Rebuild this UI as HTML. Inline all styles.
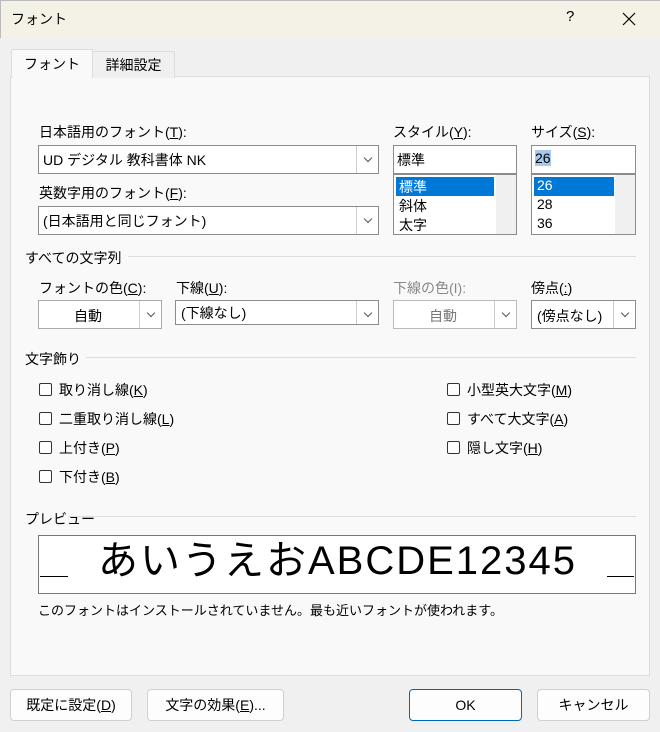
<!DOCTYPE html>
<html><head><meta charset="utf-8"><style>
*{box-sizing:border-box;margin:0;padding:0}
body{width:660px;height:732px;background:#f0f0f0;position:relative;overflow:hidden;font-family:"Liberation Sans","Noto Sans CJK JP",sans-serif;font-size:14px;color:#000}
.a{position:absolute;white-space:nowrap}
.box{position:absolute;background:#fff;border:1px solid #8c8c8c}
.dd{position:absolute;right:0;top:0;bottom:0;width:22px;border-left:1px solid #ccc;background:#fff}
.dd:after{content:"";position:absolute;left:8px;top:9px;width:5px;height:5px;border-right:1px solid #555;border-bottom:1px solid #555;transform:rotate(45deg)}
.sel{background:#0078d7;color:#fff}
.sb{position:absolute;right:0;top:0;bottom:0;width:20px;background:#f0f0f0}
.hr{position:absolute;height:1px;background:#ddd}
.cb{position:absolute;width:13px;height:13px;border:1px solid #333;background:#fff;border-radius:2px}
.btn{position:absolute;background:#fdfdfd;border:1px solid #d0d0d0;border-radius:4px;text-align:center;line-height:30px;font-size:14px}
u{text-decoration:underline}
</style></head><body>
<div class="a" style="left:0;top:0;width:660px;height:38px;background:#f4f2e6;border-top:1px solid #bbb;border-left:1px solid #bbb"></div>
<div class="a" style="left:11px;top:9px;font-size:14px">フォント</div>
<div class="a" style="left:566px;top:8px;font-size:15px">?</div>
<svg class="a" style="left:622px;top:12px" width="14" height="14"><path d="M1 1L13 13M13 1L1 13" stroke="#000" stroke-width="1.2"/></svg>
<div class="a" style="left:10px;top:76px;width:640px;height:600px;background:#f9f9f9;border:1px solid #ddd"></div>
<div class="a" style="left:92px;top:51px;width:83px;height:27px;background:#f0f0f0;border:1px solid #ddd;border-bottom:none;text-align:center;line-height:27px">詳細設定</div>
<div class="a" style="left:11px;top:49px;width:82px;height:29px;background:#f9f9f9;border:1px solid #ddd;border-bottom:none;text-align:center;line-height:29px">フォント</div>

<div class="a" style="left:39px;top:122px">日本語用のフォント(<u>T</u>):</div>
<div class="box" style="left:38px;top:145px;width:341px;height:29px"><span class="a" style="left:4px;top:4px">UD デジタル 教科書体 NK</span><div class="dd"></div></div>
<div class="a" style="left:39px;top:183px">英数字用のフォント(<u>F</u>):</div>
<div class="box" style="left:38px;top:206px;width:341px;height:29px"><span class="a" style="left:4px;top:4px">(日本語用と同じフォント)</span><div class="dd"></div></div>

<div class="a" style="left:393px;top:122px">スタイル(<u>Y</u>):</div>
<div class="box" style="left:393px;top:145px;width:124px;height:29px"><span class="a" style="left:3px;top:4px">標準</span></div>
<div class="box" style="left:393px;top:174px;width:124px;height:61px"><div class="sb"></div>
<div class="a sel" style="left:2px;top:2px;width:98px;height:19px;padding-left:3px">標準</div>
<div class="a" style="left:5px;top:21px">斜体</div><div class="a" style="left:5px;top:40px">太字</div></div>

<div class="a" style="left:531px;top:122px">サイズ(<u>S</u>):</div>
<div class="box" style="left:531px;top:145px;width:105px;height:29px"><span class="a" style="left:3px;top:4px;background:#a6c8ec">26</span></div>
<div class="box" style="left:531px;top:174px;width:105px;height:61px"><div class="sb"></div>
<div class="a sel" style="left:2px;top:2px;width:80px;height:19px;padding-left:3px">26</div>
<div class="a" style="left:5px;top:21px">28</div><div class="a" style="left:5px;top:40px">36</div></div>

<div class="a" style="left:25px;top:248px">すべての文字列</div>
<div class="hr" style="left:128px;top:256px;width:508px"></div>
<div class="a" style="left:39px;top:278px">フォントの色(<u>C</u>):</div>
<div class="box" style="left:38px;top:300px;width:124px;height:29px;border-color:#aaa"><span class="a" style="left:35px;top:5px">自動</span><div class="dd"></div></div>
<div class="a" style="left:176px;top:278px">下線(<u>U</u>):</div>
<div class="box" style="left:175px;top:300px;width:204px;height:25px"><span class="a" style="left:5px;top:2px">(下線なし)</span><div class="dd"></div></div>
<div class="a" style="left:393px;top:278px;color:#888">下線の色(I):</div>
<div class="box" style="left:393px;top:300px;width:124px;height:29px;border-color:#bbb;color:#777"><span class="a" style="left:35px;top:5px">自動</span><div class="dd"></div></div>
<div class="a" style="left:531px;top:278px">傍点(<u>:</u>)</div>
<div class="box" style="left:531px;top:300px;width:105px;height:29px"><span class="a" style="left:5px;top:5px">(傍点なし)</span><div class="dd"></div></div>

<div class="a" style="left:25px;top:349px">文字飾り</div>
<div class="hr" style="left:86px;top:357px;width:550px"></div>
<div class="cb" style="left:39px;top:383px"></div><div class="a" style="left:59px;top:380px">取り消し線(<u>K</u>)</div>
<div class="cb" style="left:39px;top:412px"></div><div class="a" style="left:59px;top:409px">二重取り消し線(<u>L</u>)</div>
<div class="cb" style="left:39px;top:441px"></div><div class="a" style="left:59px;top:438px">上付き(<u>P</u>)</div>
<div class="cb" style="left:39px;top:470px"></div><div class="a" style="left:59px;top:467px">下付き(<u>B</u>)</div>
<div class="cb" style="left:447px;top:383px"></div><div class="a" style="left:467px;top:380px">小型英大文字(<u>M</u>)</div>
<div class="cb" style="left:447px;top:412px"></div><div class="a" style="left:467px;top:409px">すべて大文字(<u>A</u>)</div>
<div class="cb" style="left:447px;top:441px"></div><div class="a" style="left:467px;top:438px">隠し文字(<u>H</u>)</div>

<div class="a" style="left:25px;top:509px">プレビュー</div>
<div class="hr" style="left:68px;top:516px;width:568px"></div>
<div class="a" style="left:38px;top:535px;width:598px;height:59px;background:#fff;border:1px solid #777"></div>
<div class="a" style="left:40px;top:576px;width:28px;height:1px;background:#000"></div>
<div class="a" style="left:607px;top:576px;width:27px;height:1px;background:#000"></div>
<div class="a" style="left:98px;top:534px;font-size:40px;line-height:54px;letter-spacing:2px">あいうえおABCDE12345</div>
<div class="a" style="left:38px;top:600px;font-size:13px">このフォントはインストールされていません。最も近いフォントが使われます。</div>

<div class="btn" style="left:10px;top:689px;width:122px;height:32px">既定に設定(<u>D</u>)</div>
<div class="btn" style="left:147px;top:689px;width:137px;height:32px">文字の効果(<u>E</u>)...</div>
<div class="btn" style="left:409px;top:689px;width:113px;height:32px;border-color:#0067c0">OK</div>
<div class="btn" style="left:537px;top:689px;width:113px;height:32px">キャンセル</div>
</body></html>
